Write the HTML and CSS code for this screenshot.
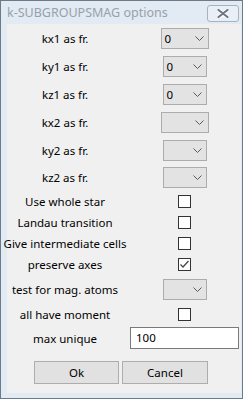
FILE: index.html
```html
<html>
<head>
    <title>k-SUBGROUPSMAG options</title>
    <link rel="stylesheet" href="styles.css">
</head>
<body>

<div id="window">

    <div id="titlebar">
        <span id="title">k-SUBGROUPSMAG options</span>
        <span id="close">
            <svg width="12" height="9" viewBox="0 0 12 9">
                <path d="M1.5 1 L10.5 8 M10.5 1 L1.5 8" stroke="#ffffff" stroke-width="4" stroke-linecap="round"/>
                <path d="M1.5 1 L10.5 8 M10.5 1 L1.5 8" stroke="#6f7882" stroke-width="2.2" stroke-linecap="round"/>
            </svg>
        </span>
    </div>

    <div id="client">
        <div class="row tall first">
            <span class="label">kx1 as fr.</span>
            <span class="combo wide"><span class="value">0</span><svg class="chev" width="9" height="5" viewBox="0 0 9 5"><polyline points="0.5,0.5 4.5,4.5 8.5,0.5" fill="none" stroke="#5a5a5a"/></svg></span>
        </div>
        <div class="row tall">
            <span class="label">ky1 as fr.</span>
            <span class="combo"><span class="value">0</span><svg class="chev" width="9" height="5" viewBox="0 0 9 5"><polyline points="0.5,0.5 4.5,4.5 8.5,0.5" fill="none" stroke="#5a5a5a"/></svg></span>
        </div>
        <div class="row tall">
            <span class="label">kz1 as fr.</span>
            <span class="combo"><span class="value">0</span><svg class="chev" width="9" height="5" viewBox="0 0 9 5"><polyline points="0.5,0.5 4.5,4.5 8.5,0.5" fill="none" stroke="#5a5a5a"/></svg></span>
        </div>
        <div class="row tall">
            <span class="label">kx2 as fr.</span>
            <span class="combo wide"><span class="value"></span><svg class="chev" width="9" height="5" viewBox="0 0 9 5"><polyline points="0.5,0.5 4.5,4.5 8.5,0.5" fill="none" stroke="#5a5a5a"/></svg></span>
        </div>
        <div class="row tall">
            <span class="label">ky2 as fr.</span>
            <span class="combo"><span class="value"></span><svg class="chev" width="9" height="5" viewBox="0 0 9 5"><polyline points="0.5,0.5 4.5,4.5 8.5,0.5" fill="none" stroke="#5a5a5a"/></svg></span>
        </div>
        <div class="row tall short6">
            <span class="label">kz2 as fr.</span>
            <span class="combo"><span class="value"></span><svg class="chev" width="9" height="5" viewBox="0 0 9 5"><polyline points="0.5,0.5 4.5,4.5 8.5,0.5" fill="none" stroke="#5a5a5a"/></svg></span>
        </div>
        <div class="row check">
            <span class="label">Use whole star</span>
            <span class="box"></span>
        </div>
        <div class="row check">
            <span class="label">Landau transition</span>
            <span class="box"></span>
        </div>
        <div class="row check">
            <span class="label">Give intermediate cells</span>
            <span class="box"></span>
        </div>
        <div class="row check">
            <span class="label">preserve axes</span>
            <span class="box"><svg width="11" height="11" viewBox="0 0 11 11"><polyline points="1.5,5.5 4,8 9.5,2" fill="none" stroke="#4a4a4a" stroke-width="1.3"/></svg></span>
        </div>
        <div class="row tall">
            <span class="label">test for mag. atoms</span>
            <span class="combo"><span class="value"></span><svg class="chev" width="9" height="5" viewBox="0 0 9 5"><polyline points="0.5,0.5 4.5,4.5 8.5,0.5" fill="none" stroke="#5a5a5a"/></svg></span>
        </div>
        <div class="row mid">
            <span class="label">all have moment</span>
            <span class="box"></span>
        </div>
        <div class="row edit">
            <span class="label">max unique</span>
            <span class="textbox">100</span>
        </div>

        <div id="buttons">
            <span class="button ok">Ok</span><span class="button cancel">Cancel</span>
        </div>
    </div>

</div>

</body>
</html>
```

FILE: styles.css
```css
body {
    margin: 0;
    font-family: "Noto Sans", sans-serif;
    font-size: 11.5px;
    color: #000000;
}

#window {
    width: 243px;
    height: 399px;
    box-sizing: border-box;
    background: #e2eaf3;
    border: solid 1px #6c7a89;
    overflow: hidden;
}

#titlebar {
    height: 23px;
    display: flex;
    justify-content: space-between;
    align-items: flex-start;
}

#title {
    margin-left: 6px;
    margin-top: 3px;
    color: #97a1ab;
    font-size: 12.5px;
}

#close {
    width: 30px;
    height: 15px;
    margin-top: 4px;
    margin-right: 3px;
    border: solid 1px #a7b2be;
    border-radius: 3px;
    background: #e9eff6;
    display: flex;
    align-items: center;
    justify-content: center;
}

#client {
    margin-left: 6px;
    width: 234px;
    height: 369px;
    background: #f0f0f0;
}

.row {
    display: grid;
    grid-template-columns: 116px 109px;
    column-gap: 7px;
    align-items: center;
    justify-items: center;
}

.tall {
    height: 28px;
}
.short6 {
    height: 27px;
}
.check {
    height: 21px;
}
.mid {
    height: 23px;
}
.edit {
    height: 24px;
}

.label {
    white-space: nowrap;
}

.combo {
    width: 44px;
    height: 21px;
    box-sizing: border-box;
    border: solid 1px #acacac;
    background: #e3e3e3;
    display: flex;
    align-items: center;
    justify-content: space-between;
    padding-left: 3px;
    padding-right: 4px;
}
.combo.wide {
    width: 48px;
}

.box {
    width: 13px;
    height: 13px;
    box-sizing: border-box;
    border: solid 1px #333333;
    background: #ffffff;
    display: flex;
    align-items: center;
    justify-content: center;
    margin-left: -1px;
}

.textbox {
    width: 109px;
    height: 22px;
    box-sizing: border-box;
    border: solid 1px #7a7a7a;
    background: #ffffff;
    padding-left: 5px;
    line-height: 20px;
    justify-self: stretch;
}

#buttons {
    display: flex;
    gap: 3px;
    margin-top: 11px;
    margin-left: 27px;
}

.button {
    height: 23px;
    box-sizing: border-box;
    border: solid 1px #adadad;
    background: #e1e1e1;
    text-align: center;
    line-height: 21px;
}
.ok {
    width: 85px;
}
.cancel {
    width: 86px;
}
```
